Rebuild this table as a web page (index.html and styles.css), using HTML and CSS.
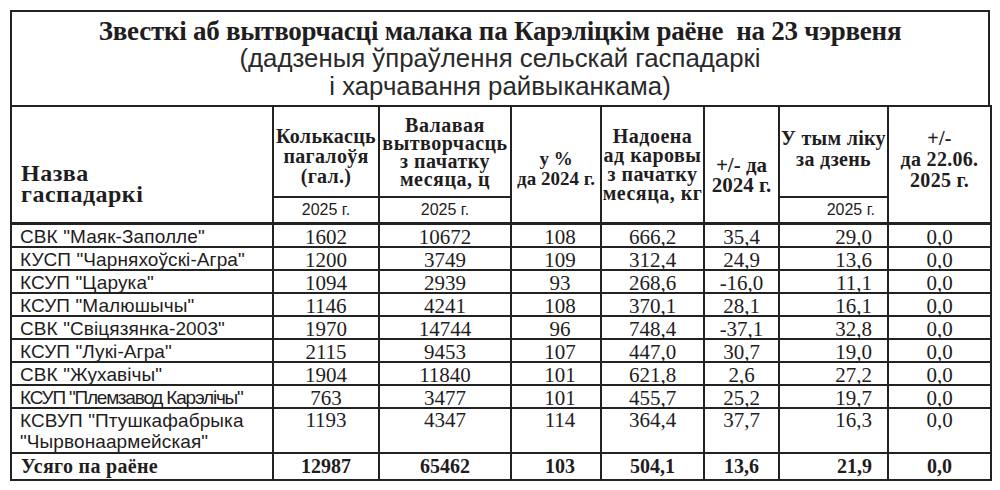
FILE: index.html
```html
<!DOCTYPE html>
<html lang="be">
<head>
<meta charset="utf-8">
<title>Звесткі аб вытворчасці малака</title>
<link rel="stylesheet" href="styles.css">
</head>
<body>
<div class="page">
  <div class="caption">
    <div class="caption-title">Звесткі аб вытворчасці малака па Карэліцкім раёне&nbsp; на 23 чэрвеня</div>
    <div class="caption-sub">(дадзеныя ўпраўлення сельскай гаспадаркі<br>і харчавання райвыканкама)</div>
  </div>
  <table class="report">
    <colgroup>
      <col class="w-name"><col class="w-heads"><col class="w-gross"><col class="w-pct">
      <col class="w-yield"><col class="w-diff"><col class="w-day"><col class="w-prev">
    </colgroup>
    <thead>
      <tr class="head-main">
        <th rowspan="2" class="h-name">Назва<br>гаспадаркі</th>
        <th class="h-heads">Колькасць<br>пагалоўя<br>(гал.)</th>
        <th class="h-gross">Валавая<br>вытворчасць<br>з пачатку<br>месяца, ц</th>
        <th rowspan="2" class="h-pct">у %<br>да 2024 г.</th>
        <th rowspan="2" class="h-yield">Надоена<br>ад каровы<br>з пачатку<br>месяца, кг</th>
        <th rowspan="2" class="h-diff">+/- да<br>2024 г.</th>
        <th class="h-day">У тым ліку<br>за дзень</th>
        <th rowspan="2" class="h-prev">+/-<br>да 22.06.<br>2025 г.</th>
      </tr>
      <tr class="head-sub">
        <td class="sub">2025 г.</td>
        <td class="sub">2025 г.</td>
        <td class="sub sub-right">2025 г.</td>
      </tr>
    </thead>
    <tbody>
      <tr><td class="name">СВК "Маяк-Заполле"</td><td>1602</td><td>10672</td><td class="pct">108</td><td>666,2</td><td>35,4</td><td class="day">29,0</td><td>0,0</td></tr>
      <tr><td class="name">КУСП "Чарняхоўскі-Агра"</td><td>1200</td><td>3749</td><td class="pct">109</td><td>312,4</td><td>24,9</td><td class="day">13,6</td><td>0,0</td></tr>
      <tr><td class="name">КСУП "Царука"</td><td>1094</td><td>2939</td><td class="pct">93</td><td>268,6</td><td>-16,0</td><td class="day">11,1</td><td>0,0</td></tr>
      <tr><td class="name">КСУП "Малюшычы"</td><td>1146</td><td>4241</td><td class="pct">108</td><td>370,1</td><td>28,1</td><td class="day">16,1</td><td>0,0</td></tr>
      <tr><td class="name">СВК "Свіцязянка-2003"</td><td>1970</td><td>14744</td><td class="pct">96</td><td>748,4</td><td>-37,1</td><td class="day">32,8</td><td>0,0</td></tr>
      <tr><td class="name">КСУП "Лукі-Агра"</td><td>2115</td><td>9453</td><td class="pct">107</td><td>447,0</td><td>30,7</td><td class="day">19,0</td><td>0,0</td></tr>
      <tr><td class="name">СВК "Жухавічы"</td><td>1904</td><td>11840</td><td class="pct">101</td><td>621,8</td><td>2,6</td><td class="day">27,2</td><td>0,0</td></tr>
      <tr><td class="name name-tight">КСУП "Племзавод Карэлічы"</td><td>763</td><td>3477</td><td class="pct">101</td><td>455,7</td><td>25,2</td><td class="day">19,7</td><td>0,0</td></tr>
      <tr class="row-double"><td class="name">КСВУП "Птушкафабрыка<br>"Чырвонаармейская"</td><td>1193</td><td>4347</td><td class="pct">114</td><td>364,4</td><td>37,7</td><td class="day">16,3</td><td>0,0</td></tr>
      <tr class="row-total"><td class="name">Усяго па раёне</td><td>12987</td><td>65462</td><td class="pct">103</td><td>504,1</td><td>13,6</td><td class="day">21,9</td><td>0,0</td></tr>
    </tbody>
  </table>
</div>
</body>
</html>
```

FILE: styles.css
```css
html, body {
  margin: 0;
  padding: 0;
  background: #ffffff;
}

body {
  color: #1f1d1e;
  font-family: "Liberation Serif", "Times New Roman", serif;
}

.page {
  padding: 10px 0 0 10px;
  width: 980px;
}

.caption {
  box-sizing: border-box;
  width: 980px;
  height: 95px;
  border: 2px solid #222;
  border-bottom: none;
  text-align: center;
  padding-top: 5px;
}

.caption-title {
  font-family: "Liberation Serif", "Times New Roman", serif;
  font-weight: bold;
  font-size: 27px;
  line-height: 28px;
  letter-spacing: -0.25px;
}

.caption-sub {
  font-family: "Liberation Sans", Arial, sans-serif;
  font-size: 25.8px;
  line-height: 28px;
  color: #2a2a2a;
  margin-top: -1px;
}

.report {
  width: 980px;
  table-layout: fixed;
  border-collapse: collapse;
  border: 2px solid #222;
}

.w-name { width: 262px; }
.w-heads { width: 106px; }
.w-gross { width: 132px; }
.w-pct { width: 90px; }
.w-yield { width: 103px; }
.w-diff { width: 75px; }
.w-day { width: 109px; }
.w-prev { width: 103px; }

.report th,
.report td {
  border: 2px solid #222;
  padding: 0;
}

.report th {
  font-family: "Liberation Serif", "Times New Roman", serif;
  font-weight: bold;
  font-size: 20px;
  line-height: 20px;
  letter-spacing: 0.3px;
  text-align: center;
  vertical-align: middle;
  white-space: nowrap;
}

.head-main { height: 91px; }
.head-sub { height: 26px; }

.report thead tr:last-child td { border-bottom-width: 3px; }
.report th[rowspan] { border-bottom-width: 3px; }

.report th.h-name {
  text-align: left;
  vertical-align: bottom;
  font-size: 24px;
  line-height: 21px;
  letter-spacing: 0.5px;
  padding: 0 0 17px 9px;
}

.report th.h-heads { padding-top: 8px; }

.report th.h-gross {
  line-height: 18px;
  letter-spacing: 0.5px;
}

.report th.h-pct { padding-top: 10px; letter-spacing: 0; font-size: 19px; }

.report th.h-yield { padding-top: 2px; line-height: 19px; letter-spacing: 0.5px; }

.report th.h-diff {
  font-size: 21px;
  line-height: 20px;
  letter-spacing: 0;
  padding-top: 22px;
}

.report th.h-day { padding-bottom: 6px; line-height: 21px; }

.report th.h-prev { padding-bottom: 10px; line-height: 21px; }

.report td.sub {
  font-family: "Liberation Sans", Arial, sans-serif;
  font-size: 16px;
  line-height: 18px;
  text-align: center;
  vertical-align: middle;
  padding-top: 1px;
}

.report td.sub-right {
  text-align: right;
  padding-right: 12px;
}

.report tbody tr { height: 23px; }
.report tbody tr.row-double { height: 45px; }
.report tbody tr.row-total { height: 27px; }

.report tbody td {
  font-size: 21px;
  line-height: 18px;
  text-align: center;
  vertical-align: top;
  padding-top: 3px;
}

.report tbody td.name {
  font-family: "Liberation Sans", Arial, sans-serif;
  font-size: 19px;
  line-height: 18px;
  letter-spacing: 0.1px;
  text-align: left;
  padding-left: 8px;
  white-space: nowrap;
}

.report tbody td.name-tight {
  letter-spacing: -1.2px;
}

.report tbody tr.row-double td {
  line-height: 21px;
  padding-top: 1px;
}

.report tbody td.pct { padding-left: 8px; }

.report tbody td.day {
  text-align: right;
  padding-right: 15px;
}

.report tbody tr.row-total td {
  font-weight: bold;
  font-size: 20px;
  line-height: 20px;
  vertical-align: middle;
  padding-top: 0;
}

.report tbody tr.row-total td.name {
  font-family: "Liberation Serif", "Times New Roman", serif;
  font-size: 20px;
  letter-spacing: 0.3px;
  padding-left: 9px;
}
```
